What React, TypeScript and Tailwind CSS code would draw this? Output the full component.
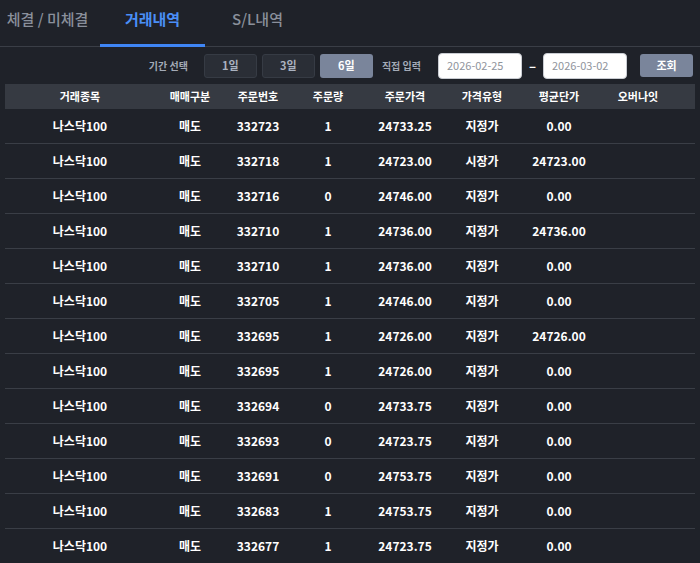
import React from 'react';

const rows: [string, string, string, string, string][] = [
  ['332723', '1', '24733.25', '지정가', '0.00'],
  ['332718', '1', '24723.00', '시장가', '24723.00'],
  ['332716', '0', '24746.00', '지정가', '0.00'],
  ['332710', '1', '24736.00', '지정가', '24736.00'],
  ['332710', '1', '24736.00', '지정가', '0.00'],
  ['332705', '1', '24746.00', '지정가', '0.00'],
  ['332695', '1', '24726.00', '지정가', '24726.00'],
  ['332695', '1', '24726.00', '지정가', '0.00'],
  ['332694', '0', '24733.75', '지정가', '0.00'],
  ['332693', '0', '24723.75', '지정가', '0.00'],
  ['332691', '0', '24753.75', '지정가', '0.00'],
  ['332683', '1', '24753.75', '지정가', '0.00'],
  ['332677', '1', '24723.75', '지정가', '0.00'],
];

const headers = ['거래종목', '매매구분', '주문번호', '주문량', '주문가격', '가격유형', '평균단가', '오버나잇'];

const cols = 'grid grid-cols-[150px_70px_66px_74px_80px_74px_80px_78px_1fr] items-center text-center';

export default function App() {
  return (
    <div className="h-[563px] w-[700px] overflow-hidden bg-[#1f2229] font-['Noto_Sans_CJK_KR',sans-serif] text-white">
      {/* tabs */}
      <div className="flex h-[47px] border-b border-[#3a3e46]">
        <div className="h-[47px] w-[95px] pt-[9px] text-center text-[15px] font-medium leading-[20px] text-[#8a909b]">
          체결 / 미체결
        </div>
        <div className="ml-[5px] h-[47px] w-[105px] border-b-[3px] border-[#3f86f5] pt-[9px] text-center text-[15px] font-bold leading-[20px] text-[#4a8ff7]">
          거래내역
        </div>
        <div className="h-[47px] w-[105px] pt-[9px] text-center text-[15px] font-medium leading-[20px] text-[#8a909b]">
          S/L내역
        </div>
      </div>

      {/* filter */}
      <div className="flex h-[37px] items-center justify-end pr-[7px] text-[11px]">
        <span className="text-[10px] font-bold text-[#a3aab6]">기간 선택</span>
        <div className="ml-[16px] flex gap-[5px]">
          <button className="h-[24px] w-[53px] rounded-[3px] border border-[#363b44] bg-[#2a2e36] font-bold text-[#aab2c0]">1일</button>
          <button className="h-[24px] w-[53px] rounded-[3px] border border-[#363b44] bg-[#2a2e36] font-bold text-[#aab2c0]">3일</button>
          <button className="h-[24px] w-[53px] rounded-[3px] bg-[#7a859b] font-bold text-white">6일</button>
        </div>
        <span className="ml-[9px] text-[10px] font-bold text-[#a3aab6]">직접 입력</span>
        <div className="ml-[17px] flex h-[26px] w-[84px] items-center rounded-[4px] border border-[#c9ccd2] bg-white pl-[8px] text-[11px] text-[#8f949c]">
          2026-02-25
        </div>
        <span className="w-[21px] text-center text-[13px] font-bold text-white">–</span>
        <div className="flex h-[26px] w-[84px] items-center rounded-[4px] border border-[#c9ccd2] bg-white pl-[8px] text-[11px] text-[#8f949c]">
          2026-03-02
        </div>
        <button className="ml-[13px] h-[23px] w-[53px] rounded-[3px] bg-[#7a859b] font-bold text-white">조회</button>
      </div>

      {/* table */}
      <div className="mx-[5px]">
        <div className={`${cols} h-[25px] bg-[#363a42] text-[11px] font-bold`}>
          {headers.map((h) => (
            <div key={h}>{h}</div>
          ))}
          <div />
        </div>
        {rows.map((r, i) => (
          <div key={i} className={`${cols} h-[35px] border-b border-[#3a3e46] text-[12px] font-bold`}>
            <div>나스닥100</div>
            <div>매도</div>
            <div>{r[0]}</div>
            <div>{r[1]}</div>
            <div>{r[2]}</div>
            <div>{r[3]}</div>
            <div>{r[4]}</div>
            <div></div>
            <div />
          </div>
        ))}
      </div>
    </div>
  );
}
